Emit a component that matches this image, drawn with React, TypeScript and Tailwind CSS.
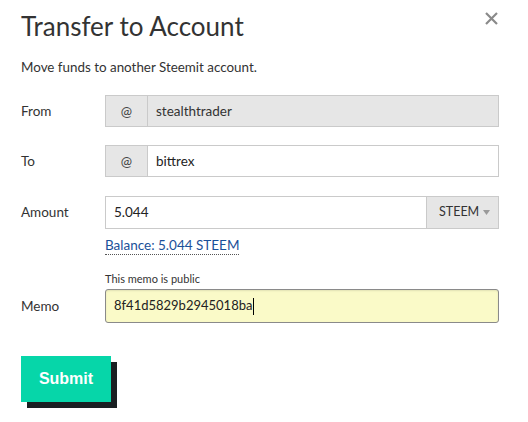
export default function App() {
  return (
    <div
      className="relative h-[422px] w-[528px] bg-white text-[#333]"
      style={{ fontFamily: "Lato, 'Open Sans', sans-serif" }}
    >
      <button
        type="button"
        aria-label="Close"
        className="absolute right-[30px] top-[12px] text-[#8a8a8a]"
      >
        <svg width="13" height="13" viewBox="0 0 13 13">
          <path d="M1 1 L12 12 M12 1 L1 12" stroke="currentColor" strokeWidth="2.2" />
        </svg>
      </button>

      <div className="px-[21px] pt-[8px]">
        <h1 className="text-[26px] leading-[36px] text-[#333]">Transfer to Account</h1>
        <p className="mt-[14px] text-[13.4px] leading-[18px] text-[#333]">
          Move funds to another Steemit account.
        </p>

        <form className="mt-[19px] flex flex-col text-[13.5px]" onSubmit={(e) => e.preventDefault()}>
          <div className="flex items-center">
            <label className="w-[84px]">From</label>
            <div className="flex h-[32px] w-[394px] border border-[#cacaca] bg-[#e6e6e6]">
              <span className="flex w-[42px] items-center justify-center border-r border-[#cacaca] text-[#444]">@</span>
              <span className="flex items-center pl-[8px] text-[#333]">stealthtrader</span>
            </div>
          </div>

          <div className="mt-[18px] flex items-center">
            <label className="w-[84px]">To</label>
            <div className="flex h-[32px] w-[394px] border border-[#cacaca] bg-white">
              <span className="flex w-[42px] items-center justify-center border-r border-[#cacaca] bg-[#e6e6e6] text-[#444]">@</span>
              <span className="flex items-center pl-[8px] text-[#222]">bittrex</span>
            </div>
          </div>

          <div className="mt-[19px] flex items-start">
            <label className="w-[84px] pt-[6px]">Amount</label>
            <div className="flex flex-col">
              <div className="flex h-[33px] w-[394px] border border-[#cacaca] bg-white">
                <span className="flex flex-1 items-center pl-[8px] text-[#222]">5.044</span>
                <span className="flex w-[72px] items-center border-l border-[#cacaca] bg-[#e6e6e6] pl-[12px] pr-[8px] text-[12.5px] text-[#333]">
                  STEEM
                  <svg className="ml-auto" width="7" height="5" viewBox="0 0 7 5">
                    <path d="M0 0 H7 L3.5 5 Z" fill="#9a9a9a" />
                  </svg>
                </span>
              </div>
              <a
                href="#"
                className="mt-[7px] self-start border-b border-dotted border-[#555] leading-[18px] text-[#1a5099]"
              >
                Balance: 5.044 STEEM
              </a>
            </div>
          </div>

          <div className="ml-[84px] mt-[17px] text-[11px] leading-[14px] text-[#333]">This memo is public</div>
          <div className="mt-[3px] flex items-center">
            <label className="w-[84px]">Memo</label>
            <div className="flex h-[34px] w-[394px] items-center rounded-[3px] border border-[#8a8a8a] bg-[#fafac8] pl-[8px] text-[13px] text-[#222] shadow-[inset_0_1px_2px_rgba(0,0,0,0.1)]">
              8f41d5829b2945018ba
              <span className="ml-[1px] inline-block h-[17px] w-[1px] bg-black" />
            </div>
          </div>

          <div className="mt-[33px]">
            <button
              type="submit"
              className="h-[46px] w-[90px] bg-[#06d6a9] text-[16px] font-bold text-white shadow-[6px_6px_0_0_#1a1f22]"
              style={{ fontFamily: "'Liberation Sans', Arial, sans-serif" }}
            >
              Submit
            </button>
          </div>
        </form>
      </div>
    </div>
  );
}
